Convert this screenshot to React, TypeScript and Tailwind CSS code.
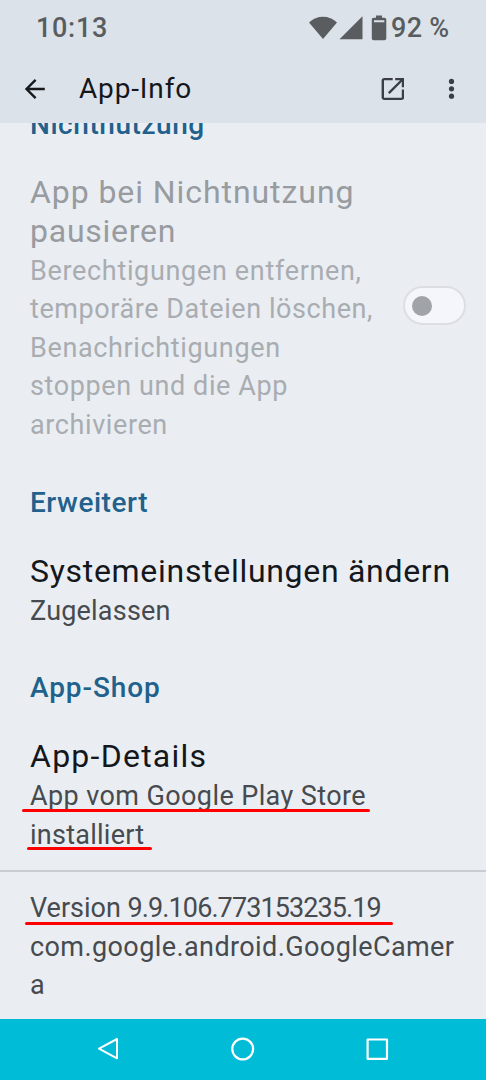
import type { ReactNode } from 'react';
import { clsx } from 'clsx';

const Line = (props: { children: ReactNode; className?: string }) => {
  return <span className={clsx('block w-max whitespace-nowrap', props.className)}>{props.children}</span>;
};

// Text line with a red marker stroke lying over it
const MarkedLine = (props: { children: ReactNode; className?: string; marker: string }) => {
  return (
    <span className={clsx('relative block w-max whitespace-nowrap', props.className)}>
      {props.children}
      <span className={clsx('absolute h-[3px] rounded-full bg-[#fe0000]', props.marker)}></span>
    </span>
  );
};

const SectionLabel = (props: { children: ReactNode; className?: string }) => {
  return (
    <h2
      className={clsx(
        'w-max text-[28px] leading-[38px] font-medium whitespace-nowrap text-[#22618b]',
        props.className,
      )}
    >
      {props.children}
    </h2>
  );
};

const StatusBar = () => {
  return (
    <div className="flex h-[55px] items-center pl-9 text-[#5a5d5f]">
      <span className="w-[273px] text-[27px] leading-[38px] font-medium tracking-[0.7px]">10:13</span>
      <svg className="h-[26px] w-[82px] shrink-0" viewBox="0 0 82 26" fill="currentColor">
        <path d="M0 7.5C8 -0.2 20 -0.2 28 7.5L14 24Z" />
        <path d="M53.5 1.3V24.3H30.5Z" />
        <path d="M67 0.4h6v2.3h2.3c1.2 0 2 .8 2 2v18.6c0 1.2-.8 2-2 2H64.8c-1.2 0-2-.8-2-2V4.7c0-1.2.8-2 2-2H67zM65 5.2v2h10.3v-2z" fillRule="evenodd" />
      </svg>
      <span className="text-[27px] leading-[38px] font-medium tracking-[0.3px] whitespace-nowrap">92 %</span>
    </div>
  );
};

const AppBar = () => {
  return (
    <div className="flex h-[68px] items-center pl-6">
      <svg className="h-[22px] w-[22px]" viewBox="0 0 22 22" fill="none" stroke="#17191c" strokeWidth="2.4">
        <path d="M20.8 11H3M11.6 1.8L2.5 11l9.1 9.2" />
      </svg>
      <h1 className="ml-[33px] w-[301px] text-[28px] leading-[38px] tracking-[0.85px] text-[#14171b]">
        App-Info
      </h1>
      <svg className="h-6 w-6" viewBox="0 0 24 24" fill="none" stroke="#3c3e46" strokeWidth="2.4">
        <path d="M12.7 2.1H4.3a1.5 1.5 0 0 0-1.5 1.5v16.8a1.5 1.5 0 0 0 1.5 1.5h17.2a1.5 1.5 0 0 0 1.5-1.5V12.5M15.2 2.1H23v8.2M22.5 2.5L8.8 16.2" />
      </svg>
      <svg className="ml-9 h-6 w-6" viewBox="0 0 24 24" fill="#3c3e46">
        <circle cx="11.5" cy="4.4" r="2.6" />
        <circle cx="11.5" cy="11.8" r="2.6" />
        <circle cx="11.5" cy="19.2" r="2.6" />
      </svg>
    </div>
  );
};

const PauseSetting = () => {
  return (
    <div className="mt-[29px] flex items-center">
      <div className="w-[373px] shrink-0">
        <h3 className="pb-[1.5px] text-[32px] leading-[38.6px] text-[#989b9f]">
          <Line className="tracking-[0.93px]">App bei Nichtnutzung</Line>
          <Line className="tracking-[0.75px]">pausieren</Line>
        </h3>
        <p className="text-[27px] leading-[38.6px] text-[#a9acb0]">
          <Line className="tracking-[0.67px]">Berechtigungen entfernen,</Line>
          <Line className="tracking-[0.57px]">temporäre Dateien löschen,</Line>
          <Line className="tracking-[0.64px]">Benachrichtigungen</Line>
          <Line className="tracking-[0.6px]">stoppen und die App</Line>
          <Line className="tracking-[0.6px]">archivieren</Line>
        </p>
      </div>
      <div
        role="switch"
        aria-checked="false"
        aria-disabled="true"
        className="mb-[6px] flex h-[39px] w-[63px] shrink-0 items-center rounded-full border-2 border-[#dcdee2] bg-[#f4f6fb] pl-[7px]"
      >
        <span className="size-5 rounded-full bg-[#a0a3a8]"></span>
      </div>
    </div>
  );
};

const NavBar = () => {
  return (
    <nav className="flex h-[61px] items-center justify-between bg-[#00bcd7] pr-[97px] pb-[1px] pl-[97px]">
      <svg className="h-6 w-6" viewBox="0 0 24 24" fill="none" stroke="#fff" strokeWidth="2" strokeLinejoin="round">
        <path d="M20 2V21.3L2 11.7Z" />
      </svg>
      <svg className="h-6 w-6" viewBox="0 0 24 24" fill="none" stroke="#fff" strokeWidth="2.2">
        <circle cx="11.7" cy="12" r="10.4" />
      </svg>
      <svg className="h-6 w-6" viewBox="0 0 24 24" fill="none" stroke="#fff" strokeWidth="2.2" strokeLinejoin="round">
        <path d="M2.6 2.5H22V21.8H2.6Z" />
      </svg>
    </nav>
  );
};

export default function App() {
  return (
    <div className="flex h-[1080px] w-[486px] flex-col overflow-hidden bg-[#eaeef3] font-['Roboto',sans-serif]">
      <header className="h-[123px] shrink-0 bg-[#dce2ea]">
        <StatusBar />
        <AppBar />
      </header>

      <main className="h-[896px] shrink-0 overflow-hidden">
        <div className="-mt-[17px] pl-[30px]">
          <SectionLabel className="tracking-[0.55px]">Nichtnutzung</SectionLabel>
          <PauseSetting />

          <SectionLabel className="mt-[39.5px] tracking-[0.55px]">Erweitert</SectionLabel>
          <div className="mt-[30px]">
            <h3 className="pb-[1px] text-[32px] leading-[38.6px] text-[#14171b]">
              <Line className="tracking-[0.7px]">Systemeinstellungen ändern</Line>
            </h3>
            <p className="text-[27px] leading-[38.6px] text-[#474a4e]">
              <Line className="tracking-[0.2px]">Zugelassen</Line>
            </p>
          </div>

          <SectionLabel className="mt-[39px] tracking-[0.9px]">App-Shop</SectionLabel>
          <div className="mt-[30px]">
            <h3 className="pb-[1px] text-[32px] leading-[38.6px] text-[#14171b]">
              <Line className="tracking-[1.25px]">App-Details</Line>
            </h3>
            <p className="text-[27px] leading-[38.6px] text-[#474a4e]">
              <MarkedLine className="tracking-[0.4px]" marker="-left-2 top-[32px] w-[348px]">
                App vom Google Play Store
              </MarkedLine>
              <MarkedLine className="tracking-[0.25px]" marker="-left-[3px] top-[31px] w-[125px]">
                installiert
              </MarkedLine>
            </p>
          </div>
        </div>

        <hr className="mt-4 border-t-2 border-[#c9ccd2]" />

        <p className="mt-[17px] pl-[30px] text-[27px] leading-[38.6px] text-[#474a4e]">
          <MarkedLine marker="-left-[5px] top-[33px] w-[368px]">
            Version <span className="tracking-[-0.9px]">9.9.106.773153235.19</span>
          </MarkedLine>
          <Line className="tracking-[0.41px]">com.google.android.GoogleCamer</Line>
          <Line>a</Line>
        </p>
      </main>

      <NavBar />
    </div>
  );
}
